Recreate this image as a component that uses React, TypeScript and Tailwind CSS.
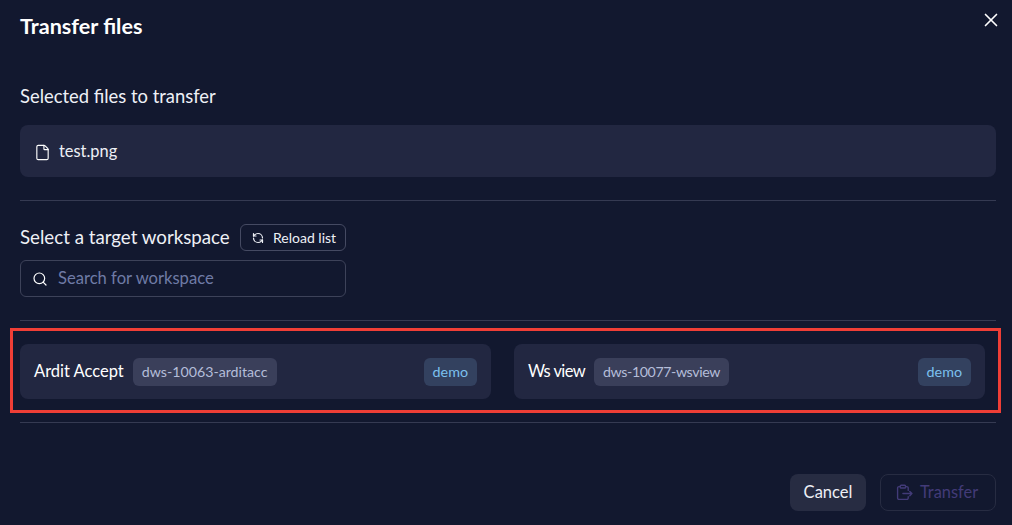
import React from 'react';
import { File, Search, RefreshCcw, X } from 'lucide-react';

interface Workspace {
  name: string;
  slug: string;
  tag: string;
  nameClass: string;
  slugClass: string;
}

const WORKSPACES: Workspace[] = [
  { name: 'Ardit Accept', slug: 'dws-10063-arditacc', tag: 'demo', nameClass: 'mr-[9px]', slugClass: '' },
  { name: 'Ws view', slug: 'dws-10077-wsview', tag: 'demo', nameClass: 'mr-[9px] tracking-[-0.6px]', slugClass: 'tracking-[-0.4px]' },
];

// Clipboard with arrow, the disabled transfer icon
const ClipboardExport = ({ className }: { className?: string }) => (
  <svg className={className} viewBox="0 0 16 16" fill="none" stroke="currentColor" strokeWidth="1.3" strokeLinecap="round" strokeLinejoin="round">
    <rect x="4" y="1.2" width="5" height="2.6" rx="0.8" />
    <path d="M4 2.5H2.8A1.3 1.3 0 0 0 1.5 3.8v9.4a1.3 1.3 0 0 0 1.3 1.3h7.4a1.3 1.3 0 0 0 1.3-1.3V12" />
    <path d="M9 2.5h1.2a1.3 1.3 0 0 1 1.3 1.3V6" />
    <path d="M6.5 9h8.5M13 7l2 2-2 2" />
  </svg>
);

const WorkspaceCard = ({ workspace }: { workspace: Workspace }) => (
  <div className="h-[55px] flex items-center px-[14px] rounded-lg bg-[#222741]">
    <span className={`text-[16.5px] text-white ${workspace.nameClass}`}>{workspace.name}</span>
    <span className={`h-[28px] flex items-center px-[9px] rounded-md bg-[#3a3f5a] text-[14.2px] text-[#b4bdd9] ${workspace.slugClass}`}>{workspace.slug}</span>
    <span className="ml-auto h-[28px] flex items-center px-[9px] rounded-md bg-[#33415f] text-[14.3px] text-[#7cc0ee]">{workspace.tag}</span>
  </div>
);

export default function App() {
  return (
    <div className="relative w-[1012px] h-[525px] overflow-hidden bg-[#12182f] pl-5 pr-4 text-white font-['Lato','Liberation_Sans',sans-serif]">
      <button className="absolute top-[9px] right-[10px] text-white">
        <X className="w-[22px] h-[22px]" strokeWidth={1.8} />
      </button>

      <h1 className="h-[52px] flex items-center text-[21.6px] font-bold">Transfer files</h1>

      <p className="mt-[33px] h-6 flex items-center text-[18.4px] text-[#eef0f6]">Selected files to transfer</p>

      <div className="mt-[16px] h-[52px] flex items-center px-[14px] gap-[8px] rounded-lg bg-[#222741]">
        <File className="w-[17px] h-[17px] mt-[2px] text-white" strokeWidth={1.6} />
        <span className="text-[16.4px] text-[#eef0f6]">test.png</span>
      </div>

      <div className="mt-[23px] h-px bg-[#353a52]" />

      <div className="mt-[23px] h-[27px] flex items-center gap-[9px]">
        <span className="w-[211px] whitespace-nowrap text-[18.7px] text-[#eef0f6]">Select a target workspace</span>
        <button className="h-[27px] w-[106px] flex items-center pl-[11px] gap-[9px] rounded-md border border-[#454a62] text-[14px] text-[#eef0f6]">
          <RefreshCcw className="w-[12px] h-[12px]" strokeWidth={2.4} />
          Reload list
        </button>
      </div>

      <div className="mt-[9px] w-[326px] h-[37px] flex items-center gap-[10px] px-[11px] rounded-md border border-[#3d4259]">
        <Search className="w-[16px] h-[16px] text-white" strokeWidth={1.8} />
        <span className="text-[16.6px] text-[#6f7ba6]">Search for workspace</span>
      </div>

      <div className="mt-[23px] h-px bg-[#353a52]" />

      <div className="relative mt-[23px] w-[965px] grid grid-cols-2 gap-[23px]">
        {WORKSPACES.map(w => (
          <WorkspaceCard key={w.slug} workspace={w} />
        ))}
        {/* Red annotation frame drawn over the list */}
        <div className="absolute -left-[10px] -top-[16px] w-[991px] h-[85px] border-[3px] border-[#ef3e36]" />
      </div>

      <div className="mt-[23px] h-px bg-[#353a52]" />

      <div className="mt-[51px] flex justify-end gap-[14px]">
        <button className="w-[76px] h-[37px] rounded-lg bg-[#272c42] text-[16.5px] text-[#eef0f6]">Cancel</button>
        <button className="w-[116px] h-[37px] flex items-center pl-[15px] gap-[7px] rounded-lg border border-[#272c42] text-[16.4px] text-[#423b78]">
          <ClipboardExport className="w-[17px] h-[17px]" />
          Transfer
        </button>
      </div>
    </div>
  );
}
